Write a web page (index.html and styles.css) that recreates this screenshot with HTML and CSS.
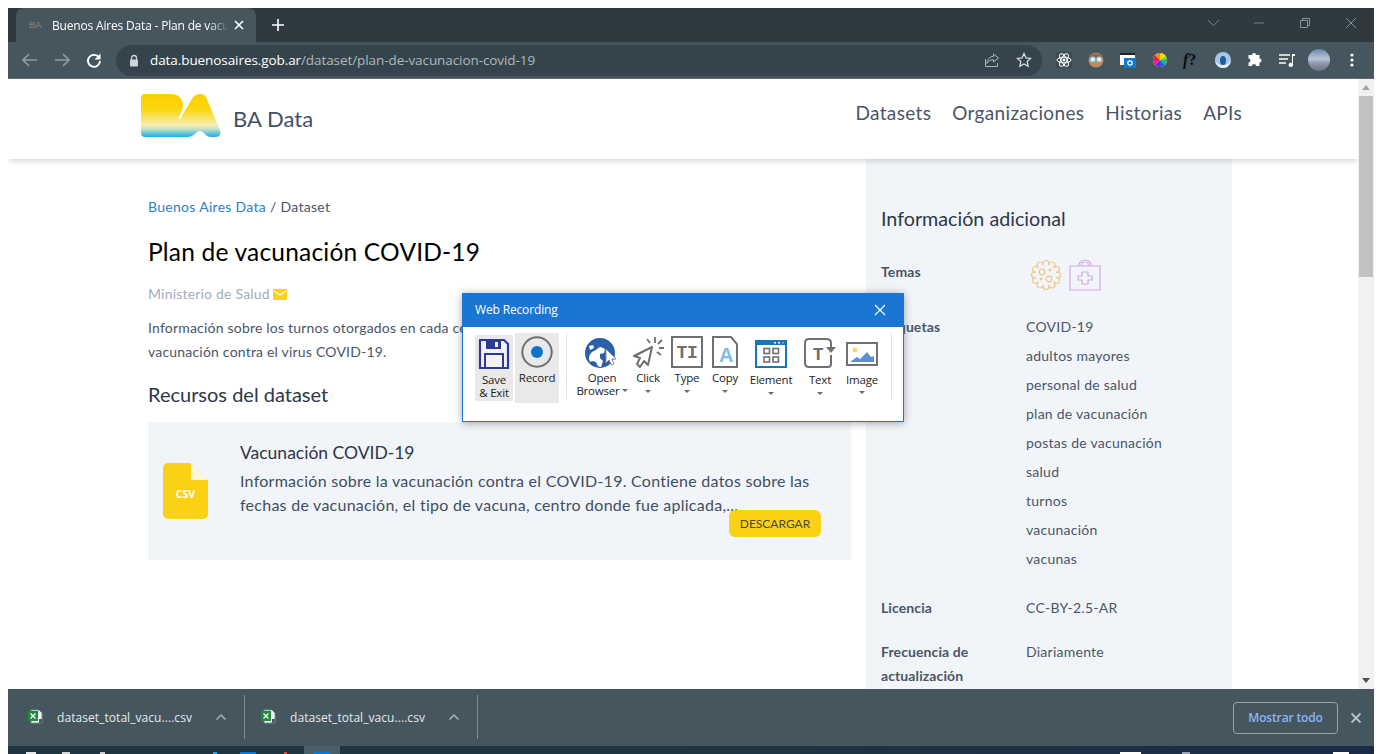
FILE: index.html
```html
<!DOCTYPE html>
<html lang="es">
<head>
<meta charset="utf-8">
<title>Buenos Aires Data - Plan de vacunación COVID-19</title>
<link rel="stylesheet" href="styles.css">
</head>
<body>
<div class="window">
  <div class="titlebar">
    <div class="tab">
      <span class="favicon">BA</span>
      <span class="tab-title">Buenos Aires Data - Plan de vacu</span>
      <svg class="tab-close" width="10" height="10" viewBox="0 0 10 10"><path d="M1 1l8 8M9 1l-8 8" stroke="#fff" stroke-width="1.600"/></svg>
    </div>
    <svg class="new-tab" width="14" height="14" viewBox="0 0 14 14"><path d="M7 1v12M1 7h12" stroke="#fff" stroke-width="1.600"/></svg>
    <div class="win-controls">
      <svg class="wc" width="46" height="12" viewBox="0 0 46 12"><path d="M18 3l5.500 5.500L29 3" fill="none" stroke="#71808a"/></svg>
      <svg class="wc" width="46" height="12" viewBox="0 0 46 12"><path d="M18 6h10" stroke="#71808a"/></svg>
      <svg class="wc" width="46" height="12" viewBox="0 0 46 12"><path d="M18.500 3.500h7v7h-7zM20.500 3.500v-2h7v7h-2" fill="none" stroke="#84929a"/></svg>
      <svg class="wc" width="46" height="12" viewBox="0 0 46 12"><path d="M18 1l10 10M28 1L18 11" stroke="#84929a"/></svg>
    </div>
  </div>
  <div class="toolbar">
    <div class="nav-btns">
      <svg width="32" height="16" viewBox="0 0 32 16"><path d="M23 8H9M15 2L9 8l6 6" fill="none" stroke="#8f9ca3" stroke-width="1.700"/></svg>
      <svg width="32" height="16" viewBox="0 0 32 16"><path d="M9 8h14M17 2l6 6-6 6" fill="none" stroke="#8f9ca3" stroke-width="1.700"/></svg>
      <svg width="32" height="16" viewBox="0 0 32 16"><path d="M21 5.500A6 6 0 1 0 22 9" fill="none" stroke="#fff" stroke-width="1.900"/><path d="M22.500 1.500v6h-6z" fill="#fff"/></svg>
    </div>
    <div class="omnibox">
      <svg class="lock" width="10" height="13" viewBox="0 0 10 13"><path d="M2.500 6V4a2.500 2.500 0 0 1 5 0v2" fill="none" stroke="#cfd6da" stroke-width="1.300"/><rect x="1" y="5.500" width="8" height="7" rx="1" fill="#cfd6da"/></svg>
      <span class="url"><span class="url-host">data.buenosaires.gob.ar</span>/dataset/plan-de-vacunacion-covid-19</span>
      <svg class="omni-icon" width="16" height="16" viewBox="0 0 16 16"><path d="M1.500 7v7.500h12V11M9.500 2l5 4-5 4V7.800C6 7.800 4 9 2.800 11.500 3.200 7.500 5.500 4.700 9.500 4.300z" fill="none" stroke="#aab5bb" stroke-width="1"/></svg>
      <svg class="omni-icon" width="16" height="16" viewBox="0 0 16 16"><path d="M8 1.500l2 4.400 4.700.5-3.500 3.200 1 4.700L8 11.900l-4.200 2.400 1-4.700L1.300 6.400 6 5.900z" fill="none" stroke="#d5dbde" stroke-width="1.300"/></svg>
    </div>
    <div class="extensions">
      <svg width="16" height="16" viewBox="0 0 16 16"><rect width="16" height="16" fill="#3d4c54"/><g fill="none" stroke="#fff" stroke-width="1"><ellipse cx="8" cy="8" rx="7" ry="2.800"/><ellipse cx="8" cy="8" rx="7" ry="2.800" transform="rotate(60 8 8)"/><ellipse cx="8" cy="8" rx="7" ry="2.800" transform="rotate(120 8 8)"/></g><circle cx="8" cy="8" r="1.400" fill="#fff"/></svg>
      <svg width="16" height="16" viewBox="0 0 16 16"><circle cx="8" cy="8" r="7.500" fill="#c08a5e"/><path d="M1 6a7.500 7.500 0 0 1 14 0z" fill="#8a6a4d"/><circle cx="4.800" cy="7.500" r="2.700" fill="#dff0f4" stroke="#7fb4c4"/><circle cx="11.200" cy="7.500" r="2.700" fill="#dff0f4" stroke="#7fb4c4"/></svg>
      <svg width="16" height="16" viewBox="0 0 16 16"><path d="M0 1h15v12H0z" fill="#fff"/><path d="M0 1h15v2H0z" fill="#222"/><rect x="4" y="6" width="12" height="10" fill="#0f79d0"/><circle cx="10" cy="11" r="2.200" fill="none" stroke="#fff" stroke-width="1.200"/></svg>
      <svg class="ext-wheel" width="18" height="18" viewBox="0 0 18 18"><circle cx="9" cy="9" r="7" fill="#e8e8e8"/><path d="M9 9V2a7 7 0 0 1 6 3.500z" fill="#f5d90a"/><path d="M9 9l6-3.500A7 7 0 0 1 16 9z" fill="#7ed321"/><path d="M9 9h7a7 7 0 0 1-2 5z" fill="#14b1a0"/><path d="M9 9l5 5a7 7 0 0 1-5 2z" fill="#1c5fe8"/><path d="M9 9v7a7 7 0 0 1-5-2z" fill="#7a1fd1"/><path d="M9 9l-5 5a7 7 0 0 1-2-5z" fill="#e01fa0"/><path d="M9 9H2a7 7 0 0 1 2-5z" fill="#e8202a"/><path d="M9 9L4 4a7 7 0 0 1 5-2z" fill="#f58a0a"/><circle cx="9" cy="1.500" r="1" fill="#555"/><circle cx="9" cy="16.500" r="1" fill="#555"/><circle cx="1.500" cy="9" r="1" fill="#555"/><circle cx="16.500" cy="9" r="1" fill="#555"/></svg>
      <span class="ext-f"><i>f</i>?</span>
      <svg width="16" height="16" viewBox="0 0 16 16"><circle cx="8" cy="8" r="8" fill="#a8c6e6"/><ellipse cx="8" cy="8.500" rx="3" ry="4.500" fill="#1d5f9e"/><path d="M0 8a8 8 0 0 0 16 0c-1 3-4 5-8 5s-7-2-8-5z" fill="#e0ecf6"/></svg>
      <svg width="16" height="16" viewBox="0 0 16 16"><path d="M1 4h3.500a2 2 0 1 1 4 0H12v3.500a2 2 0 1 1 0 4V15H8.500a2 2 0 1 0-4 0H1v-3.500a2 2 0 1 0 0-4z" fill="#fff" transform="translate(.5 -1)"/></svg>
      <svg width="16" height="16" viewBox="0 0 16 16"><path d="M0 3h11M0 7h9M0 11h7" stroke="#fff" stroke-width="1.300"/><path d="M13 2h3v2h-2v9a2.200 2.200 0 1 1-1-2z" fill="#fff"/></svg>
      <span class="avatar"></span>
      <svg width="4" height="14" viewBox="0 0 4 14"><circle cx="2" cy="2" r="1.600" fill="#fff"/><circle cx="2" cy="7" r="1.600" fill="#fff"/><circle cx="2" cy="12" r="1.600" fill="#fff"/></svg>
    </div>
  </div>

  <div class="viewport">
    <div class="page">
      <header class="site-header">
        <div class="brand">
          <svg class="logo" width="80" height="43" viewBox="0 0 80 43">
            <defs><linearGradient id="ba" x1="0" y1="0" x2="0" y2="1"><stop offset="0" stop-color="#fbd000"/><stop offset=".35" stop-color="#fbd60f"/><stop offset=".72" stop-color="#f5eeb0"/><stop offset=".82" stop-color="#bfe2c8"/><stop offset="1" stop-color="#15ade8"/></linearGradient></defs>
            <path fill="url(#ba)" d="M0 4Q0 0 4 0H29Q41 0 42 11Q42 18 37 24L39 25L52 3Q55 0 59 0Q63 0 65 3L79 36Q81 43 74 43H70Q66 43 63 39Q59 35 55 39Q51 43 46 43H4Q0 43 0 39Z"/>
          </svg>
          <span class="brand-name">BA Data</span>
        </div>
        <nav class="site-nav">
          <a>Datasets</a><a>Organizaciones</a><a>Historias</a><a>APIs</a>
        </nav>
      </header>
      <div class="content">
        <main class="main-col">
          <p class="crumbs"><a>Buenos Aires Data</a> / Dataset</p>
          <h1>Plan de vacunación COVID-19</h1>
          <p class="org">Ministerio de Salud
            <svg width="14" height="11" viewBox="0 0 14 11"><rect width="14" height="11" rx="1" fill="#fbd116"/><path d="M1 2l6 4 6-4" fill="none" stroke="#fff" stroke-width="1.300"/></svg>
          </p>
          <p class="desc">Información sobre los turnos otorgados en cada centro de salud para la<br>vacunación contra el virus COVID-19.</p>
          <h2 class="res-title">Recursos del dataset</h2>
          <article class="card">
            <svg class="csv" width="45" height="56" viewBox="0 0 45 56"><path d="M5 0H27L45 18V51a5 5 0 0 1-5 5H5a5 5 0 0 1-5-5V5a5 5 0 0 1 5-5z" fill="#fbd116"/><path d="M28 1L44 17H28z" fill="#fdf6d8"/><text x="22.500" y="35" text-anchor="middle" class="csv-label">CSV</text></svg>
            <div class="card-body">
              <h3>Vacunación COVID-19</h3>
              <p>Información sobre la vacunación contra el COVID-19. Contiene datos sobre las fechas de vacunación, el tipo de vacuna, centro donde fue aplicada,...</p>
              <a class="btn">DESCARGAR</a>
            </div>
          </article>
        </main>
        <aside class="side">
          <h2>Información adicional</h2>
          <dl class="facts">
            <dt>Temas</dt>
            <dd class="temas">
              <svg width="32" height="32" viewBox="0 0 32 32" class="faint"><g fill="none" stroke="#f2b65c" stroke-width="1.200"><circle cx="16" cy="4.500" r="3"/><circle cx="22" cy="6" r="3"/><circle cx="26.500" cy="10.500" r="3"/><circle cx="27.500" cy="16" r="3"/><circle cx="26.500" cy="21.500" r="3"/><circle cx="22" cy="26" r="3"/><circle cx="16" cy="27.500" r="3"/><circle cx="10" cy="26" r="3"/><circle cx="5.500" cy="21.500" r="3"/><circle cx="4.500" cy="16" r="3"/><circle cx="5.500" cy="10.500" r="3"/><circle cx="10" cy="6" r="3"/><circle cx="16" cy="16" r="10.500" fill="#f1f5f9" stroke="none"/><circle cx="12" cy="13" r="2.800"/><circle cx="19" cy="20" r="2.800"/><circle cx="20" cy="11" r=".8"/><circle cx="11" cy="20" r=".8"/></g></svg>
              <svg width="32" height="32" viewBox="0 0 32 32" class="faint"><g fill="none" stroke="#c48fdc" stroke-width="1.200"><path d="M1 7h30v24H1z"/><path d="M10 7V6a6 5 0 0 1 12 0v1M12.500 7V6a3.500 3 0 0 1 7 0v1"/><path d="M13 13h6v4h4v4h-4v4h-6v-4H9v-4h4z" stroke-linejoin="round"/></g></svg>
            </dd>
            <dt>Etiquetas</dt>
            <dd class="tags">
              <span>COVID-19</span><span>adultos mayores</span><span>personal de salud</span><span>plan de vacunación</span><span>postas de vacunación</span><span>salud</span><span>turnos</span><span>vacunación</span><span>vacunas</span>
            </dd>
            <dt>Licencia</dt><dd>CC-BY-2.5-AR</dd>
            <dt>Frecuencia de actualización</dt><dd>Diariamente</dd>
          </dl>
        </aside>
      </div>
    </div>
    <div class="scrollbar">
      <span class="sb-up"></span>
      <span class="sb-thumb"></span>
      <span class="sb-fill"></span>
      <span class="sb-down"></span>
    </div>
  </div>

  <div class="downloads">
    <div class="dl-item dl-first">
      <svg width="16" height="16" viewBox="0 0 16 16"><path d="M3 1h8l3 3v10H3z" fill="#f4f6f8" stroke="#7d8a92"/><rect x="0" y="2" width="10" height="10" fill="#1f8a3b"/><path d="M2.500 4.500l5 5M7.500 4.500l-5 5" stroke="#fff" stroke-width="1.300"/><rect x="11" y="10" width="3" height="4" fill="#4b5a63"/></svg>
      <span class="dl-name">dataset_total_vacu....csv</span>
      <svg class="dl-caret" width="12" height="8" viewBox="0 0 12 8"><path d="M1.500 6.500L6 2l4.500 4.500" fill="none" stroke="#a6b1b7" stroke-width="1.500"/></svg>
    </div>
    <div class="dl-item">
      <svg width="16" height="16" viewBox="0 0 16 16"><path d="M3 1h8l3 3v10H3z" fill="#f4f6f8" stroke="#7d8a92"/><rect x="0" y="2" width="10" height="10" fill="#1f8a3b"/><path d="M2.500 4.500l5 5M7.500 4.500l-5 5" stroke="#fff" stroke-width="1.300"/><rect x="11" y="10" width="3" height="4" fill="#4b5a63"/></svg>
      <span class="dl-name">dataset_total_vacu....csv</span>
      <svg class="dl-caret" width="12" height="8" viewBox="0 0 12 8"><path d="M1.500 6.500L6 2l4.500 4.500" fill="none" stroke="#a6b1b7" stroke-width="1.500"/></svg>
    </div>
    <a class="show-all">Mostrar todo</a>
    <svg class="dl-close" width="12" height="12" viewBox="0 0 12 12"><path d="M1.500 1.500l9 9M10.500 1.500l-9 9" stroke="#b6c0c5" stroke-width="1.800"/></svg>
  </div>

  <div class="taskbar">
    <span class="tb tb-a"></span><span class="tb tb-b"></span><span class="tb tb-c"></span>
    <span class="tb tb-d"></span><span class="tb tb-e"></span><span class="tb tb-f"></span>
    <span class="tb-active"><span class="tb tb-g"></span></span>
    <span class="tb tb-h"></span><span class="tb tb-i"></span><span class="tb tb-j"></span>
  </div>
</div>

<section class="recorder">
  <div class="rec-title">
    <span>Web Recording</span>
    <svg width="12" height="12" viewBox="0 0 12 12"><path d="M1 1l10 10M11 1L1 11" stroke="#fff" stroke-width="1.100"/></svg>
  </div>
  <div class="rec-tools">
    <div class="tool tool-save">
      <svg width="32" height="32" viewBox="0 0 32 32"><path d="M2 2h24l4 4v24H2z" fill="#f2f2f6" stroke="#2e3a94" stroke-width="2.200"/><path d="M8 2h15v9H8z" fill="#2e3a94"/><rect x="17" y="4" width="3" height="5" fill="#f2f2f6"/><path d="M7 30V16h18v14" fill="none" stroke="#2e3a94" stroke-width="2"/></svg>
      <span>Save<br>&amp; Exit</span>
    </div>
    <div class="tool tool-record">
      <svg width="32" height="32" viewBox="0 0 32 32"><circle cx="16" cy="16" r="14.700" fill="none" stroke="#6e6e6e" stroke-width="2"/><circle cx="16" cy="16" r="6" fill="#0f73c9"/></svg>
      <span>Record</span>
    </div>
    <span class="rec-sep"></span>
    <div class="tool tool-open">
      <svg width="34" height="32" viewBox="0 0 34 32"><circle cx="15" cy="15" r="15" fill="#2b5fa8"/><path d="M4 21c0-4 2-7 5-8s4-4 7-4l4 2-1 4-4 1 0 4 3 3-2 6c-3 0-4-2-5-5l-4-1-2 1z" fill="#fff"/><path d="M4 8l4-1 1 3-4 2z" fill="#fff"/><path d="M21 11v14l3.200-3 2.300 5 2.500-1.200-2.200-4.800H31z" fill="#fff" stroke="#8b8b8b"/></svg>
      <span>Open<br>Browser<i class="caret caret-inline"></i></span>
    </div>
    <div class="tool tool-click">
      <svg width="32" height="32" viewBox="0 0 32 32"><path d="M20 11L2 20l6 2-3 6 3 3 4-6 4 4z" fill="#fff" stroke="#707070" stroke-width="2" stroke-linejoin="round"/><path d="M18 12L4 20" stroke="#707070"/><path d="M23 1v6M15 3l3 4M30 4l-4 4M32 12h-5M29 19l-4-3" stroke="#707070" stroke-width="1.800"/></svg>
      <span>Click</span><i class="caret"></i>
    </div>
    <div class="tool tool-type">
      <svg width="32" height="32" viewBox="0 0 32 32"><rect x="1" y="1" width="30" height="30" fill="none" stroke="#707070" stroke-width="2"/><text x="16" y="22" text-anchor="middle" class="glyph-t">TI</text></svg>
      <span>Type</span><i class="caret"></i>
    </div>
    <div class="tool tool-copy">
      <svg width="28" height="32" viewBox="0 0 28 32"><path d="M2 1h18l6 7v23H2z" fill="#fff" stroke="#707070" stroke-width="2"/><text x="15" y="26" text-anchor="middle" class="glyph-a">A</text></svg>
      <span>Copy</span><i class="caret"></i>
    </div>
    <div class="tool tool-el">
      <svg width="32" height="28" viewBox="0 0 32 28"><rect width="32" height="28" fill="#1477b8"/><rect x="2" y="5" width="28" height="21" fill="#fff"/><circle cx="20" cy="2.700" r="1" fill="#fff"/><circle cx="24" cy="2.700" r="1" fill="#fff"/><circle cx="28" cy="2.700" r="1" fill="#f3808c"/><g fill="none" stroke="#707070" stroke-width="1.600"><rect x="9" y="8.500" width="5.500" height="5"/><rect x="18" y="8.500" width="5.500" height="5"/><rect x="9" y="17" width="5.500" height="5"/><rect x="18" y="17" width="5.500" height="5"/></g></svg>
      <span>Element</span><i class="caret"></i>
    </div>
    <div class="tool tool-text">
      <svg width="32" height="30" viewBox="0 0 32 30"><path d="M22 1H5Q1 1 1 5v20q0 4 4 4h19q3 0 3-3v-9M22 1q5 0 5 4v5" fill="none" stroke="#707070" stroke-width="2"/><path d="M22 9h10l-5 6z" fill="#707070"/><text x="14" y="22" text-anchor="middle" class="glyph-t">T</text></svg>
      <span>Text</span><i class="caret"></i>
    </div>
    <div class="tool tool-img">
      <svg width="32" height="24" viewBox="0 0 32 24"><rect x="1" y="1" width="30" height="22" fill="#fff" stroke="#707070" stroke-width="2"/><circle cx="9" cy="8" r="2.400" fill="#f5d76e"/><path d="M4 20l7-5 3 2 7-7 4 5 3-1v6z" fill="#5c92d4"/></svg>
      <span>Image</span><i class="caret"></i>
    </div>
    <span class="rec-sep rec-sep-end"></span>
  </div>
</section>
</body>
</html>
```

FILE: styles.css
```css
* { box-sizing: border-box; }
html, body { margin: 0; height: 100%; overflow: hidden; background: #fff; }
body { padding: 8px 8px 0; font-family: "Open Sans", "Liberation Sans", sans-serif; }

.window { height: 746px; display: flex; flex-direction: column; overflow: hidden; }

/* Browser chrome */
.titlebar { flex: 0 0 34px; background: #2f3a40; display: flex; align-items: stretch; position: relative; padding-left: 8px; }
.tab { width: 240px; background: #45565f; border-radius: 8px 8px 0 0; display: flex; align-items: center; padding-left: 13px; color: #fff; }
.favicon { font: 700 9px "Liberation Sans", sans-serif; color: #7b7775; width: 18px; flex: none; letter-spacing: -.4px; }
.tab-title { font-size: 12px; letter-spacing: -.18px; white-space: nowrap; width: 177px; flex: none; margin-left: 5px; -webkit-mask-image: linear-gradient(90deg, #000 88%, transparent); mask-image: linear-gradient(90deg, #000 88%, transparent); }
.tab-close { margin-left: 5px; flex: none; }
.new-tab { align-self: center; margin-left: 15px; }
.win-controls { margin-left: auto; display: flex; align-items: center; margin-top: -4px; }
.wc { display: block; }

.toolbar { flex: 0 0 37px; background: #45565f; display: flex; align-items: center; padding-left: 6px; border-bottom: 1px solid #5b6b73; }
.nav-btns { display: flex; align-items: center; width: 102px; flex: none; }
.omnibox { width: 926px; height: 31px; flex: none; background: #35444c; border-radius: 16px; display: flex; align-items: center; padding: 0 10px 0 13px; }
.lock { flex: none; }
.url { font-size: 13.500px; color: #aeb9bf; margin-left: 11px; letter-spacing: -.08px; white-space: nowrap; flex: 1; }
.url-host { color: #fff; }
.omni-icon { flex: none; margin-left: 16px; }
.extensions { display: flex; align-items: center; margin-left: 14px; }
.extensions > * { flex: none; margin-right: 16px; }
.extensions > .ext-wheel { margin-right: 14px; margin-left: -1px; }
.ext-f { width: 16px; font: 700 16px "Liberation Serif", serif; color: #0c0c0c; white-space: nowrap; }
.extensions > .avatar { width: 22px; height: 22px; border-radius: 50%; background: linear-gradient(180deg, #6d87ad 0, #b9c6d6 45%, #8c9bae 65%, #6d6f7d 100%); margin-right: 20px; margin-left: -3px; }

/* Page */
.viewport { flex: 0 0 610px; display: flex; min-height: 0; }
.page { flex: 1; min-width: 0; overflow: hidden; color: #2d3748; font-family: Lato, "Open Sans", sans-serif; }
.scrollbar { flex: 0 0 16px; background: #f1f1f1; display: flex; flex-direction: column; align-items: stretch; }
.sb-up, .sb-down { flex: 0 0 17px; display: flex; justify-content: center; align-items: center; }
.sb-up::before { content: ""; border: 4px solid transparent; border-top: 0; border-bottom: 5px solid #a3a3a3; }
.sb-down::before { content: ""; border: 4px solid transparent; border-bottom: 0; border-top: 5px solid #505050; }
.sb-thumb { flex: 0 0 181px; background: #c1c1c1; margin: 0 1px; }
.sb-fill { flex: 1; }

.site-header { height: 80px; background: #fff; display: flex; justify-content: space-between; align-items: center; padding: 0 116px 0 133px; box-shadow: 0 4px 6px -1px rgba(0,0,0,.1), 0 2px 4px -1px rgba(0,0,0,.07); position: relative; z-index: 2; }
.brand { display: flex; align-items: center; gap: 12px; margin-top: -7px; }
.logo { display: block; }
.brand-name { font-size: 22px; letter-spacing: .05px; color: #3f4f66; margin-top: 6px; }
.site-nav { display: flex; gap: 21px; font-size: 19px; letter-spacing: .33px; color: #4a5568; margin-top: -13px; }

.content { display: flex; height: 530px; padding-left: 140px; }
.main-col { width: 703px; flex: none; padding-top: 39px; }
.crumbs { margin: 0; font-size: 14px; line-height: 17px; letter-spacing: .3px; color: #4a5568; }
.crumbs a { color: #2b7fc4; }
h1 { margin: 22px 0 0; font-size: 24.500px; line-height: 30px; letter-spacing: .2px; font-weight: 400; color: #000; }
.org { margin: 17px 0 0; font-size: 14px; line-height: 20px; letter-spacing: .2px; color: #a0aec0; display: flex; align-items: center; gap: 3px; }
.desc { margin: 12px 0 0; font-size: 14px; line-height: 24px; letter-spacing: .2px; color: #4a5568; width: 703px; }
.res-title { margin: 17px 0 0; font-size: 20px; line-height: 26px; font-weight: 400; color: #2d3748; }
.card { margin-top: 15px; height: 138px; background: #f1f5f9; display: flex; padding: 41px 30px 0 15px; }
.csv { flex: none; }
.csv-label { font: 700 10.500px "Open Sans", sans-serif; fill: #fff; }
.card-body { margin-left: 32px; margin-top: -41px; padding-top: 19px; flex: 1; display: flex; flex-direction: column; }
.card-body h3 { margin: 0; font-size: 17.500px; line-height: 24px; font-weight: 400; color: #2d3748; }
.card-body p { margin: 4px 0 0; font-size: 16px; line-height: 24px; letter-spacing: .26px; color: #434e60; }
.btn { align-self: flex-end; margin-top: -7px; height: 27px; width: 92px; background: #fbd116; border-radius: 6px; font-size: 12px; line-height: 27px; text-align: center; color: #4a4a3a; }

.side { width: 366px; flex: none; margin-left: 15px; background: #f1f5f9; padding: 47px 15px 0; overflow: hidden; }
.side h2 { margin: 0; font-size: 19.700px; line-height: 26px; font-weight: 400; color: #2d3748; }
.facts { margin: 28px 0 0; display: grid; grid-template-columns: 145px 1fr; font-size: 14px; line-height: 24px; letter-spacing: .25px; color: #4a5568; }
.facts dt { font-weight: 700; letter-spacing: .1px; margin-bottom: 20px; }
.facts dd { margin: 0 0 20px; }
.facts .temas { display: flex; gap: 7px; padding-left: 4px; margin: -1px 0 24px; height: 32px; }
.faint { opacity: .75; }
.facts .tags { display: flex; flex-direction: column; gap: 5px; margin-bottom: 25px; }

/* Downloads */
.downloads { flex: 0 0 57px; background: #45565f; display: flex; align-items: center; padding-right: 12px; }
.dl-item { width: 233px; height: 44px; flex: none; display: flex; align-items: center; padding-left: 16px; border-right: 1px solid #7e8c94; margin-top: -1px; }
.dl-first { width: 237px; padding-left: 20px; }
.dl-item svg { flex: none; }
.dl-name { font-size: 12px; color: #e6eaec; margin-left: 13px; white-space: nowrap; width: 136px; flex: none; letter-spacing: .06px; }
.dl-caret { margin-left: 22px; }
.show-all { margin-left: auto; width: 105px; height: 32px; border: 1px solid #97a4ab; border-radius: 4px; font-size: 12px; font-weight: 600; line-height: 30px; text-align: center; color: #8ab4f8; letter-spacing: -.15px; }
.dl-close { margin-left: 12px; }

.taskbar { flex: 0 0 8px; display: flex; align-items: flex-end; background: linear-gradient(90deg, #1f3640 0, #1f3640 50%, #1b2a47 100%); overflow: hidden; }
.tb { display: block; height: 2px; flex: none; }
.tb-a { width: 10px; margin-left: 18px; background: #e8e8e8; }
.tb-b { width: 8px; margin-left: 26px; background: #d8d8d8; }
.tb-c { width: 5px; margin-left: 30px; background: #cfcfcf; }
.tb-d { width: 4px; margin-left: 108px; background: #25a7e0; }
.tb-e { width: 16px; margin-left: 23px; background: #0a78d7; }
.tb-f { width: 3px; margin-left: 28px; background: #d94f4f; }
.tb-active { flex: none; width: 36px; height: 8px; margin-left: 17px; background: #4a6068; display: flex; align-items: flex-end; padding-left: 9px; }
.tb-g { width: 17px; background: #0a78d7; }
.tb-h { width: 21px; margin-left: 780px; background: #fff; }
.tb-i { width: 8px; margin-left: 41px; background: #9aa4b5; }
.tb-j { width: 16px; margin-left: 143px; background: #fff; }

/* Floating recorder window */
.recorder { position: absolute; left: 462px; top: 293px; width: 442px; height: 129px; background: #fff; border: 1px solid #1976d2; box-shadow: 0 1px 8px rgba(0,0,0,.35); font-family: "Open Sans", "Liberation Sans", sans-serif; color: #1c1c1c; }
.rec-title { height: 33px; background: #1976d2; color: #fff; font-size: 12px; letter-spacing: -.15px; display: flex; align-items: center; justify-content: space-between; padding: 0 17px 2px 12px; }
.rec-tools { display: flex; align-items: flex-start; padding: 6px 0 0 12px; font-size: 11.500px; line-height: 13px; letter-spacing: -.2px; text-align: center; }
.tool { flex: none; display: flex; flex-direction: column; align-items: center; white-space: nowrap; }
.tool svg { display: block; flex: none; }
.tool span { display: block; }
.tool-save { width: 38px; height: 66px; margin-top: 2px; background: #e9e9e9; padding-top: 3px; }
.tool-save span { margin-top: 3px; }
.tool-record { width: 44px; height: 70px; margin-left: 2px; background: #e9e9e9; padding-top: 3px; }
.tool-record span { margin-top: 3px; }
.rec-sep { flex: none; width: 1px; height: 66px; background: #e2e2e2; margin: 0 9px 0 7px; }
.rec-sep-end { margin: 0 0 0 9px; }
.tool-open { width: 52px; padding-top: 5px; }
.tool-open span { margin-top: 1px; }
.tool-click { width: 40px; padding-top: 3px; }
.tool-type { width: 38px; padding-top: 3px; }
.tool-copy { width: 38px; padding-top: 3px; }
.tool-el { width: 54px; padding-top: 7px; }
.tool-text { width: 44px; padding-top: 5px; }
.tool-img { width: 40px; padding-top: 9px; }
.tool-click span, .tool-type span, .tool-copy span { margin-top: 3px; }
.tool-el span, .tool-text span { margin-top: 5px; }
.tool-img span { margin-top: 7px; }
.caret { display: block; width: 0; height: 0; margin-top: 6px; border: 3px solid transparent; border-bottom: 0; border-top: 3px solid #6b6b6b; }
.tool-img .caret { margin-top: 5px; }
.caret-inline { display: inline-block; margin: 0 0 2px 2px; vertical-align: middle; }
.glyph-t { font: 700 18px "Liberation Mono", monospace; fill: #707070; }
.glyph-a { font: 700 20px "Liberation Sans", sans-serif; fill: #7fbde8; }
```
